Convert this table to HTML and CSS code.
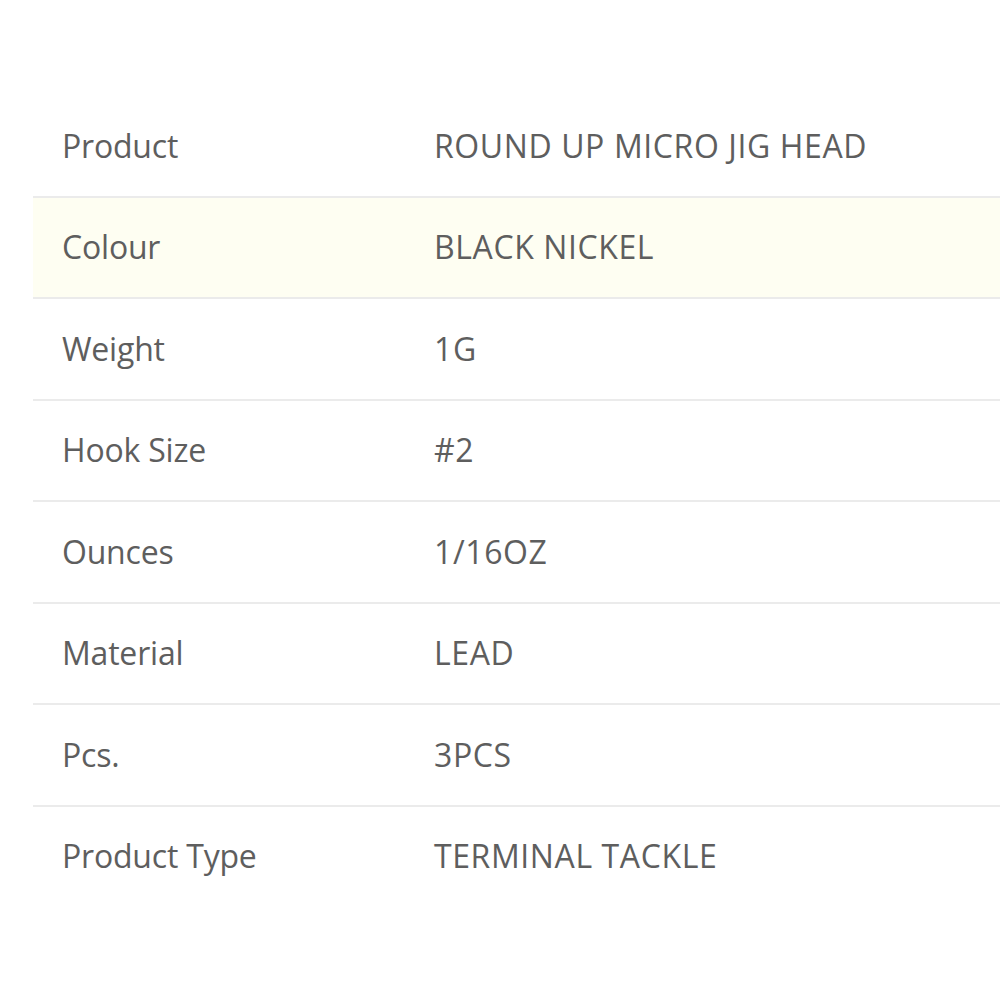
FILE: index.html
```html
<!DOCTYPE html>
<html>
<head>
<meta charset="utf-8">
<link rel="stylesheet" href="styles.css">
</head>
<body>
<table class="spec">
  <tbody>
    <tr><td class="k">Product</td><td class="v">ROUND UP MICRO JIG HEAD</td></tr>
    <tr class="hl"><td class="k">Colour</td><td class="v">BLACK NICKEL</td></tr>
    <tr><td class="k">Weight</td><td class="v">1G</td></tr>
    <tr><td class="k">Hook Size</td><td class="v">#2</td></tr>
    <tr><td class="k">Ounces</td><td class="v">1/16OZ</td></tr>
    <tr><td class="k">Material</td><td class="v">LEAD</td></tr>
    <tr><td class="k">Pcs.</td><td class="v">3PCS</td></tr>
    <tr class="last"><td class="k">Product Type</td><td class="v">TERMINAL TACKLE</td></tr>
  </tbody>
</table>
</body>
</html>
```
FILE: styles.css
```css
html, body {
  margin: 0;
  padding: 0;
  background: #ffffff;
}
body {
  padding-top: 96px;
  padding-left: 33px;
  overflow: hidden;
  font-family: "Open Sans", "Noto Sans", sans-serif;
  color: #5e5e5e;
}
.spec {
  border-collapse: collapse;
  width: 967px;
  font-size: 32px;
}
.spec td {
  height: 99.5px;
  padding: 0 0 0 29px;
  border-bottom: 2px solid #ebebeb;
  vertical-align: middle;
  line-height: 1;
}
.spec td.k {
  width: 343px;
  letter-spacing: -0.2px;
}
.spec td.v {
  letter-spacing: 0.6px;
}
.spec tr.hl td {
  background: #fefef2;
}
.spec tr.last td {
  border-bottom: none;
}
```
